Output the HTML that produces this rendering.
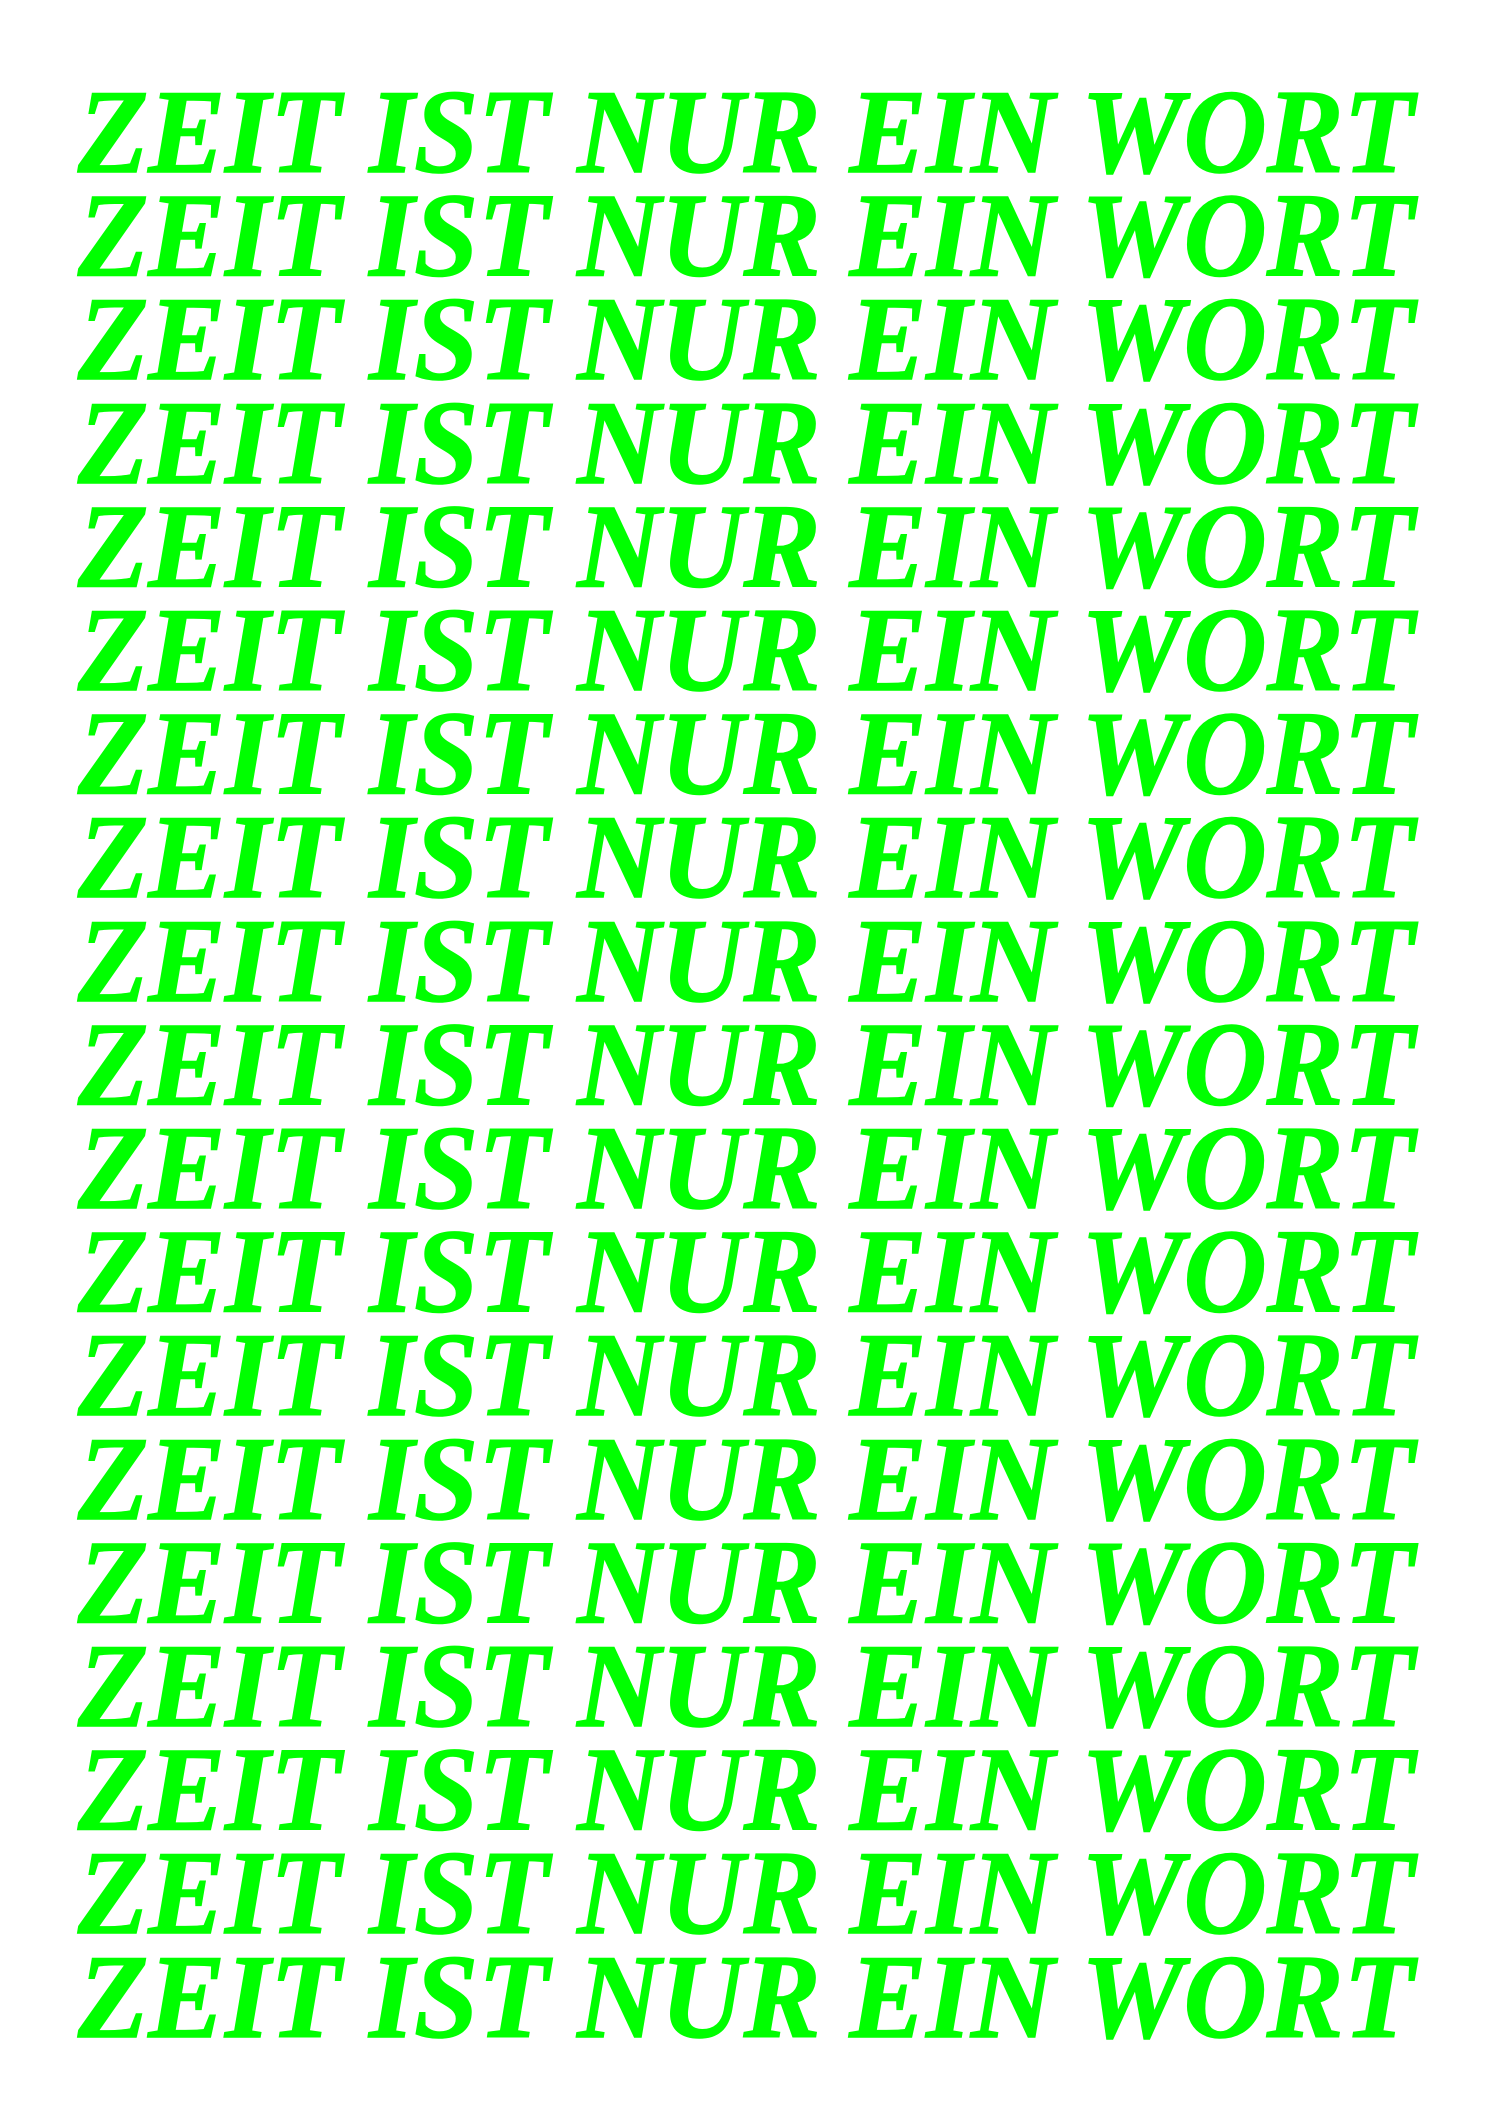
<!DOCTYPE html>
<html><head><meta charset="utf-8"><style>
html,body{margin:0;padding:0;background:#fff;width:1500px;height:2121px;overflow:hidden}
svg{display:block}
text{font-family:"Liberation Serif",serif;font-weight:bold;font-style:italic;font-size:120px;fill:#00ff00;stroke:#00ff00;stroke-width:1.5px}
</style></head><body>
<svg width="1500" height="2121" viewBox="0 0 1500 2121">
<text x="78" y="172" textLength="1336" lengthAdjust="spacingAndGlyphs">ZEIT IST NUR EIN WORT</text>
<text x="78" y="275.6" textLength="1336" lengthAdjust="spacingAndGlyphs">ZEIT IST NUR EIN WORT</text>
<text x="78" y="379.2" textLength="1336" lengthAdjust="spacingAndGlyphs">ZEIT IST NUR EIN WORT</text>
<text x="78" y="482.8" textLength="1336" lengthAdjust="spacingAndGlyphs">ZEIT IST NUR EIN WORT</text>
<text x="78" y="586.4" textLength="1336" lengthAdjust="spacingAndGlyphs">ZEIT IST NUR EIN WORT</text>
<text x="78" y="690" textLength="1336" lengthAdjust="spacingAndGlyphs">ZEIT IST NUR EIN WORT</text>
<text x="78" y="793.6" textLength="1336" lengthAdjust="spacingAndGlyphs">ZEIT IST NUR EIN WORT</text>
<text x="78" y="897.2" textLength="1336" lengthAdjust="spacingAndGlyphs">ZEIT IST NUR EIN WORT</text>
<text x="78" y="1000.8" textLength="1336" lengthAdjust="spacingAndGlyphs">ZEIT IST NUR EIN WORT</text>
<text x="78" y="1104.4" textLength="1336" lengthAdjust="spacingAndGlyphs">ZEIT IST NUR EIN WORT</text>
<text x="78" y="1208" textLength="1336" lengthAdjust="spacingAndGlyphs">ZEIT IST NUR EIN WORT</text>
<text x="78" y="1311.6" textLength="1336" lengthAdjust="spacingAndGlyphs">ZEIT IST NUR EIN WORT</text>
<text x="78" y="1415.2" textLength="1336" lengthAdjust="spacingAndGlyphs">ZEIT IST NUR EIN WORT</text>
<text x="78" y="1518.8" textLength="1336" lengthAdjust="spacingAndGlyphs">ZEIT IST NUR EIN WORT</text>
<text x="78" y="1622.4" textLength="1336" lengthAdjust="spacingAndGlyphs">ZEIT IST NUR EIN WORT</text>
<text x="78" y="1726" textLength="1336" lengthAdjust="spacingAndGlyphs">ZEIT IST NUR EIN WORT</text>
<text x="78" y="1829.6" textLength="1336" lengthAdjust="spacingAndGlyphs">ZEIT IST NUR EIN WORT</text>
<text x="78" y="1933.2" textLength="1336" lengthAdjust="spacingAndGlyphs">ZEIT IST NUR EIN WORT</text>
<text x="78" y="2036.8" textLength="1336" lengthAdjust="spacingAndGlyphs">ZEIT IST NUR EIN WORT</text>
</svg>
</body></html>
